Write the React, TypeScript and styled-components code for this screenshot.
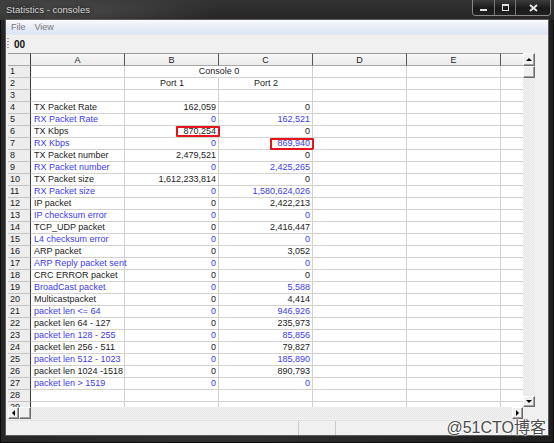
import React, { FC } from 'react';
import styled, { createGlobalStyle } from 'styled-components';

type Stat = { label: string; b: string; c: string };

const stats: Stat[] = [
  { label: 'TX Packet Rate', b: '162,059', c: '0' },
  { label: 'RX Packet Rate', b: '0', c: '162,521' },
  { label: 'TX Kbps', b: '870,254', c: '0' },
  { label: 'RX Kbps', b: '0', c: '869,940' },
  { label: 'TX Packet number', b: '2,479,521', c: '0' },
  { label: 'RX Packet number', b: '0', c: '2,425,265' },
  { label: 'TX Packet size', b: '1,612,233,814', c: '0' },
  { label: 'RX Packet size', b: '0', c: '1,580,624,026' },
  { label: 'IP packet', b: '0', c: '2,422,213' },
  { label: 'IP checksum error', b: '0', c: '0' },
  { label: 'TCP_UDP packet', b: '0', c: '2,416,447' },
  { label: 'L4 checksum error', b: '0', c: '0' },
  { label: 'ARP packet', b: '0', c: '3,052' },
  { label: 'ARP Reply packet sent', b: '0', c: '0' },
  { label: 'CRC ERROR packet', b: '0', c: '0' },
  { label: 'BroadCast packet', b: '0', c: '5,588' },
  { label: 'Multicastpacket', b: '0', c: '4,414' },
  { label: 'packet len <= 64', b: '0', c: '946,926' },
  { label: 'packet len 64 - 127', b: '0', c: '235,973' },
  { label: 'packet len 128 - 255', b: '0', c: '85,856' },
  { label: 'packet len 256 - 511', b: '0', c: '79,827' },
  { label: 'packet len 512 - 1023', b: '0', c: '185,890' },
  { label: 'packet len 1024 -1518', b: '0', c: '890,793' },
  { label: 'packet len > 1519', b: '0', c: '0' },
];

// cells marked with a red box in the screenshot
const marked: Record<number, 'b' | 'c'> = { 6: 'b', 7: 'c' };

// the sixth column only peeks in at the right edge, its letter is out of view
const columns = ['A', 'B', 'C', 'D', 'E', ''];

export default function App() {
  return (
    <>
      <GlobalStyle />
      <Window>
        <TitleBar>
          <Title>Statistics - consoles</Title>
          <CaptionGroup>
            <CaptionButton $w={21}>
              <MinGlyph />
            </CaptionButton>
            <CaptionButton $w={20}>
              <MaxGlyph />
            </CaptionButton>
            <CaptionButton $w={34}>
              <svg width="9" height="8" viewBox="0 0 9 8">
                <path d="M1 1 L8 7 M8 1 L1 7" stroke="#e6e6e6" strokeWidth="2" />
              </svg>
            </CaptionButton>
          </CaptionGroup>
        </TitleBar>
        <Client>
          <MenuBar>
            <MenuItem>File</MenuItem>
            <MenuItem>View</MenuItem>
          </MenuBar>
          <ToolBar>
            <Grip />
            <ToolLabel>00</ToolLabel>
          </ToolBar>
          <Workspace>
            <Sheet />
          </Workspace>
          <StatusBar>
            <StatusPane $w={294} />
            <StatusPane $w={36} />
            <StatusPane $w={176} />
            <StatusPane $w={36} />
          </StatusBar>
        </Client>
        <Watermark>@51CTO博客</Watermark>
      </Window>
    </>
  );
}

const Sheet: FC = () => {
  const body = [];
  for (let n = 1; n <= 29; n++) {
    const stat = n >= 4 ? stats[n - 4] : undefined;
    const blue = n >= 5 && n % 2 === 1;
    body.push(
      <Row key={n}>
        <RowHead>{n}</RowHead>
        <Cell $blue={blue}>{stat?.label}</Cell>
        {n === 1 ? (
          <Cell $span={2} $align="center">
            Console 0
          </Cell>
        ) : n === 2 ? (
          <>
            <Cell $align="center">Port 1</Cell>
            <Cell $align="center">Port 2</Cell>
          </>
        ) : (
          <>
            <Cell $align="right" $blue={blue}>
              {stat?.b}
              {marked[n] === 'b' && <Mark />}
            </Cell>
            <Cell $align="right" $blue={blue}>
              {stat?.c}
              {marked[n] === 'c' && <Mark $tall />}
            </Cell>
          </>
        )}
        <Cell />
        <Cell />
        <Cell />
      </Row>
    );
  }
  return (
    <SheetFrame>
      <Viewport>
        <HeadRow>
          <Corner />
          {columns.map((c, i) => (
            <ColHead key={i}>{c}</ColHead>
          ))}
        </HeadRow>
        {body}
      </Viewport>
      <VScroll>
        <ScrollButton $h={13}>
          <Arrow $dir="up" />
        </ScrollButton>
        <Thumb $h={12} />
        <Track />
        <ScrollButton $h={11}>
          <Arrow $dir="down" />
        </ScrollButton>
      </VScroll>
      <HScroll>
        <ScrollButton $w={11}>
          <Arrow $dir="left" />
        </ScrollButton>
        <Thumb $w={12} />
        <Track />
        <ScrollButton $w={11}>
          <Arrow $dir="right" />
        </ScrollButton>
      </HScroll>
      <ScrollCorner />
    </SheetFrame>
  );
};

const GlobalStyle = createGlobalStyle`
  html, body {
    margin: 0;
    padding: 0;
    background: #1b1b1b;
  }
  body {
    font-family: "Liberation Sans", Arial, sans-serif;
  }
`;

const Window = styled.div`
  position: relative;
  width: 554px;
  height: 443px;
  display: flex;
  flex-direction: column;
  background: linear-gradient(90deg, #262626, #303030 40%, #1e1e1e);
  box-shadow: inset 0 0 0 1px #0a0a0a;
  overflow: hidden;
`;

const TitleBar = styled.div`
  height: 20px;
  flex: none;
  display: flex;
  align-items: flex-start;
  justify-content: space-between;
  background: radial-gradient(ellipse 160px 22px at 60px 10px, #4a4a4a, transparent),
    linear-gradient(180deg, #333 0%, #262626 100%);
`;

const Title = styled.div`
  padding: 4px 0 0 6px;
  font-size: 9.5px;
  line-height: 12px;
  color: #d4d4d4;
  text-shadow: 0 0 4px #000;
`;

const CaptionGroup = styled.div`
  display: flex;
  margin-right: 3px;
  border: 1px solid #8a8a8a;
  border-top: none;
  border-radius: 0 0 4px 4px;
  overflow: hidden;
`;

const CaptionButton = styled.div<{ $w: number }>`
  width: ${(p) => p.$w}px;
  height: 15px;
  display: flex;
  align-items: center;
  justify-content: center;
  background: linear-gradient(180deg, #3c3c3c, #1a1a1a 55%, #222);
  & + & {
    border-left: 1px solid #777;
  }
`;

const MinGlyph = styled.div`
  width: 7px;
  height: 2px;
  margin-top: 5px;
  background: #e0e0e0;
`;

const MaxGlyph = styled.div`
  width: 5px;
  height: 4px;
  border: 1px solid #e0e0e0;
  border-top-width: 2px;
`;

const Client = styled.div`
  flex: 1;
  margin: 0 6px 9px 6px;
  display: flex;
  flex-direction: column;
  background: #f0f0f0;
  box-shadow: 0 0 0 1px #5a5a5a;
`;

const MenuBar = styled.div`
  height: 14px;
  display: flex;
  align-items: center;
  gap: 9px;
  padding-left: 5px;
  background: linear-gradient(180deg, #fbfbfb 0%, #eef1f7 30%, #dde5f4 100%);
  border-bottom: 1px solid #e4e8ef;
`;

const MenuItem = styled.span`
  font-size: 9px;
  color: #777;
`;

const ToolBar = styled.div`
  height: 18px;
  display: flex;
  align-items: center;
  gap: 4px;
  padding-left: 1px;
  background: #f0f0f0;
`;

const Grip = styled.div`
  width: 2px;
  height: 12px;
  background: repeating-linear-gradient(180deg, #a0a0a0 0 1px, transparent 1px 3px);
`;

const ToolLabel = styled.span`
  font-size: 10px;
  font-weight: bold;
  color: #111;
  margin-left: 1px;
`;

const Workspace = styled.div`
  padding: 0 13px 1px 2px;
`;

const SheetFrame = styled.div`
  width: 527px;
  height: 366px;
  display: grid;
  grid-template-columns: 515px 12px;
  grid-template-rows: 354px 12px;
  background: #f0f0f0;
`;

const Viewport = styled.div`
  overflow: hidden;
  background: #fff;
  font-size: 9px;
  color: #1c1c1c;
`;

const Row = styled.div`
  display: grid;
  grid-template-columns: 23px repeat(6, 94px);
  height: 12px;
`;

const HeadRow = styled(Row)`
  height: 13px;
`;

const Corner = styled.div`
  box-sizing: border-box;
  background: #efefef;
  border-top: 1px solid #9a9a9a;
  border-right: 1px solid #3a3a3a;
  border-bottom: 1px solid #a8a8a8;
`;

const ColHead = styled.div`
  box-sizing: border-box;
  height: 13px;
  text-align: center;
  line-height: 12px;
  background: linear-gradient(180deg, #f6f6f6, #ebebeb);
  border-top: 1px solid #9a9a9a;
  border-right: 1px solid #555;
  border-bottom: 1px solid #a8a8a8;
  color: #222;
`;

const RowHead = styled.div`
  box-sizing: border-box;
  height: 12px;
  line-height: 11px;
  padding-left: 2px;
  background: #ededed;
  border-right: 1px solid #3a3a3a;
  border-bottom: 1px solid #c4c4c4;
  color: #222;
`;

const Cell = styled.div<{ $align?: 'left' | 'center' | 'right'; $blue?: boolean; $span?: number }>`
  position: relative;
  box-sizing: border-box;
  height: 12px;
  line-height: 11px;
  padding: 0 2px 0 3px;
  white-space: nowrap;
  text-align: ${(p) => p.$align ?? 'left'};
  color: ${(p) => (p.$blue ? '#3b3bf2' : '#1c1c1c')};
  grid-column: span ${(p) => p.$span ?? 1};
  border-right: 1px solid #d2d2d2;
  border-bottom: 1px solid #d2d2d2;
`;

const Mark = styled.span<{ $tall?: boolean }>`
  position: absolute;
  top: 0;
  bottom: ${(p) => (p.$tall ? -1 : 0)}px;
  right: -2px;
  width: 44px;
  box-sizing: border-box;
  border: 2px solid #e8141c;
  border-radius: 1px;
`;

const VScroll = styled.div`
  display: flex;
  flex-direction: column;
  background: #e9e9e9;
`;

const HScroll = styled.div`
  display: flex;
  background: #e9e9e9;
`;

const Track = styled.div`
  flex: 1;
  background: repeating-conic-gradient(#f4f4f4 0 25%, #e4e4e4 0 50%) 0 0 / 2px 2px;
`;

const ScrollButton = styled.div<{ $w?: number; $h?: number }>`
  box-sizing: border-box;
  width: ${(p) => (p.$w ? `${p.$w}px` : '100%')};
  height: ${(p) => (p.$h ? `${p.$h}px` : '100%')};
  flex: none;
  display: flex;
  align-items: center;
  justify-content: center;
  background: #f0f0f0;
  border: 1px solid;
  border-color: #fff #6a6a6a #6a6a6a #fff;
  box-shadow: inset -1px -1px 0 #a0a0a0;
`;

const Thumb = styled(ScrollButton)`
  background: #efefef;
`;

const Arrow = styled.span<{ $dir: 'up' | 'down' | 'left' | 'right' }>`
  width: 0;
  height: 0;
  border: 3px solid transparent;
  ${(p) =>
    p.$dir === 'up'
      ? 'border-bottom: 3px solid #000; border-top-width: 0; margin-top: -1px;'
      : p.$dir === 'down'
      ? 'border-top: 3px solid #000; border-bottom-width: 0;'
      : p.$dir === 'left'
      ? 'border-right: 3px solid #000; border-left-width: 0;'
      : 'border-left: 3px solid #000; border-right-width: 0;'}
`;

const ScrollCorner = styled.div`
  background: #f0f0f0;
`;

const StatusBar = styled.div`
  height: 14px;
  display: flex;
  background: #f0f0f0;
  border-top: 1px solid #e2e2e2;
`;

const StatusPane = styled.div<{ $w: number }>`
  width: ${(p) => p.$w}px;
  & + & {
    border-left: 1px solid #c9c9c9;
  }
`;

const Watermark = styled.div`
  position: absolute;
  right: 8px;
  bottom: 5px;
  font-family: "Liberation Sans", "Noto Sans CJK SC", sans-serif;
  font-size: 16px;
  line-height: 20px;
  color: #4d4d4d;
  text-shadow: 0 0 2px #fff, 0 0 2px #fff, 0 0 1px #fff;
`;
